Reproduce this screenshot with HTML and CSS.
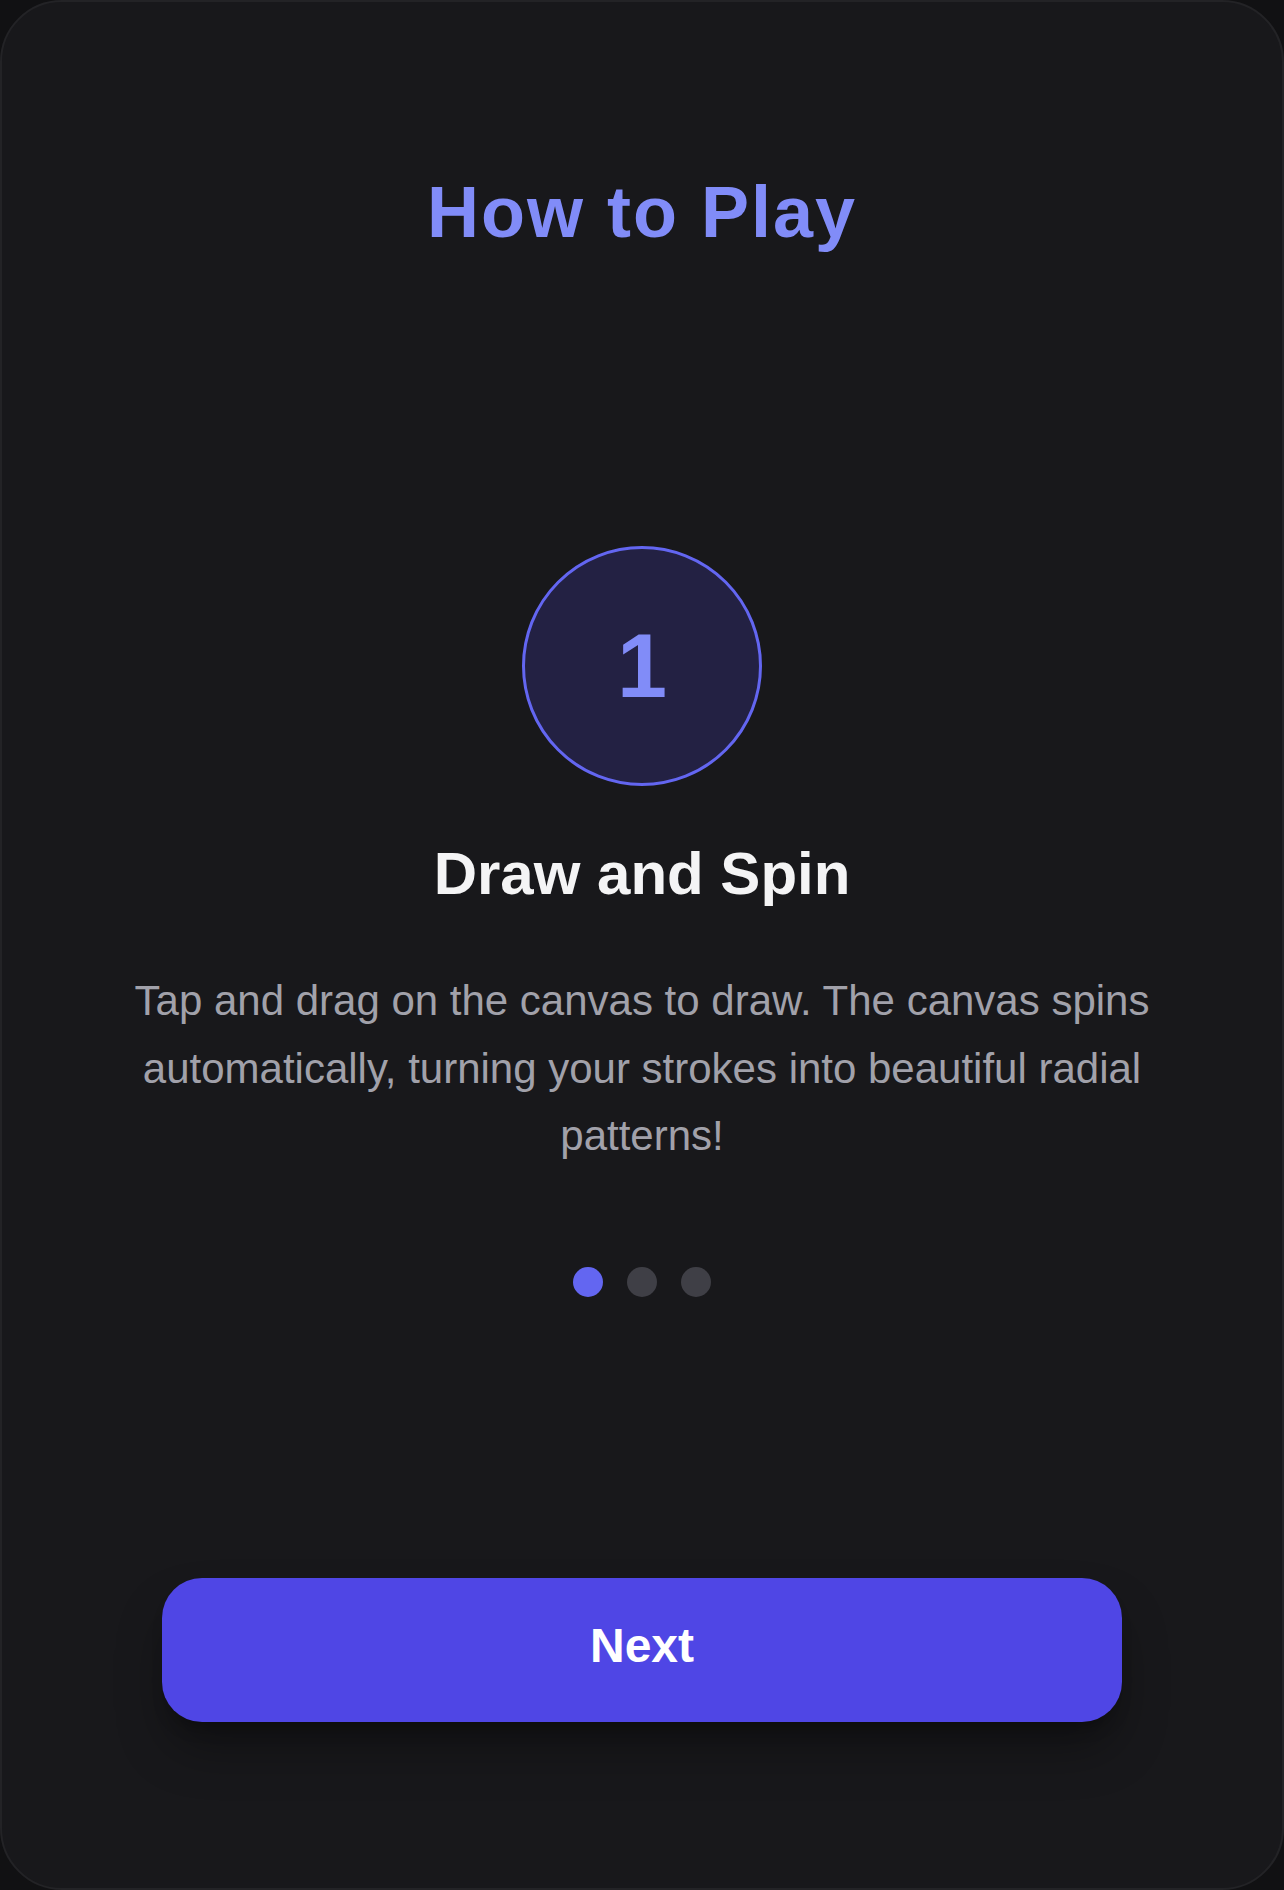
FILE: index.html
```html
<!DOCTYPE html>
<html lang="en">
<head>
<meta charset="utf-8">
<title>How to Play</title>
<link rel="stylesheet" href="styles.css">
</head>
<body>
<div class="phone">
  <h1 class="title">How to Play</h1>
  <main class="content">
    <div class="step-badge">1</div>
    <h2 class="step-title">Draw and Spin</h2>
    <p class="step-text">Tap and drag on the canvas to draw. The canvas spins automatically, turning your strokes into beautiful radial patterns!</p>
    <div class="dots">
      <span class="dot dot-active"></span>
      <span class="dot"></span>
      <span class="dot"></span>
    </div>
  </main>
  <button class="next-btn" type="button">Next</button>
</div>
</body>
</html>
```

FILE: styles.css
```css
html, body {
  margin: 0;
  padding: 0;
}

body {
  background: #111113;
  font-family: "Liberation Sans", Arial, sans-serif;
}

.phone {
  box-sizing: border-box;
  width: 1284px;
  height: 1890px;
  border: 2px solid #232326;
  border-radius: 62px;
  background: #18181b;
  display: flex;
  flex-direction: column;
  align-items: center;
  padding: 167px 72px 166px;
  overflow: hidden;
}

.title {
  margin: 0;
  font-size: 72px;
  line-height: 1.2;
  font-weight: 700;
  letter-spacing: 2px;
  color: #818cf8;
  text-align: center;
}

.content {
  flex: 1;
  display: flex;
  flex-direction: column;
  align-items: center;
  justify-content: center;
  width: 100%;
  padding-top: 10px;
}

.step-badge {
  box-sizing: border-box;
  width: 240px;
  height: 240px;
  border-radius: 50%;
  border: 3px solid #6366f1;
  background: rgba(79, 70, 229, 0.2);
  color: #818cf8;
  font-size: 90px;
  font-weight: 700;
  display: flex;
  align-items: center;
  justify-content: center;
  margin-bottom: 52px;
}

.step-title {
  margin: 0 0 57px;
  font-size: 60px;
  line-height: 1.2;
  font-weight: 700;
  color: #f4f4f5;
  text-align: center;
}

.step-text {
  margin: 0 0 98px;
  font-size: 42px;
  line-height: 1.6;
  color: #a1a1aa;
  text-align: center;
  max-width: 1100px;
}

.dots {
  display: flex;
  gap: 24px;
}

.dot {
  width: 30px;
  height: 30px;
  border-radius: 50%;
  background: #3f3f46;
}

.dot-active {
  background: #6366f1;
}

.next-btn {
  width: 100%;
  max-width: 960px;
  height: 144px;
  flex: none;
  border: none;
  border-radius: 40px;
  padding: 0 0 9px;
  background: #4f46e5;
  color: #ffffff;
  font-family: "Liberation Sans", Arial, sans-serif;
  font-size: 48px;
  font-weight: 700;
  box-shadow: 0 30px 50px -6px rgba(0, 0, 0, 0.35), 0 12px 18px -10px rgba(0, 0, 0, 0.35);
}
```
